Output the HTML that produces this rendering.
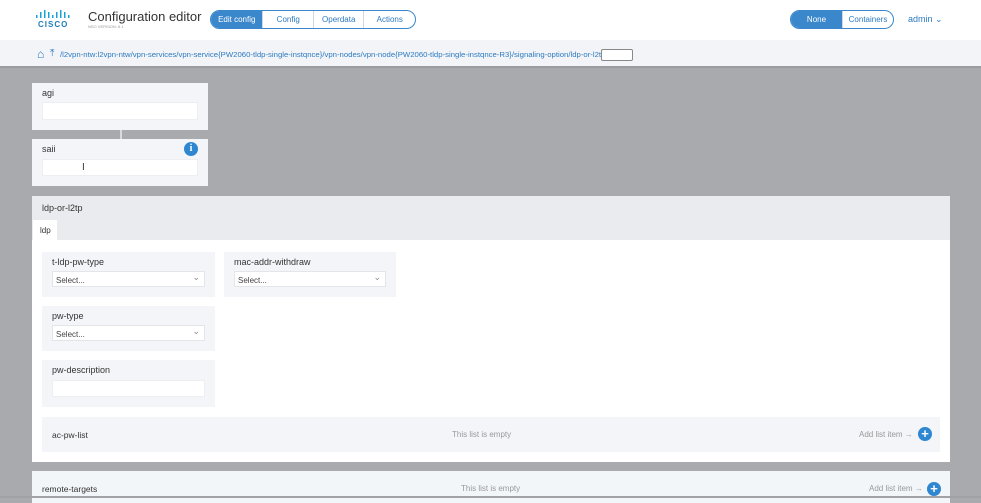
<!DOCTYPE html>
<html><head><style>
*{box-sizing:border-box;margin:0;padding:0}
body{width:981px;height:503px;overflow:hidden;background:#a8aaad;font-family:"Liberation Sans",sans-serif;position:relative;font-size:9px;color:#333}
.a{position:absolute}
.hdr{left:0;top:0;width:981px;height:40px;background:#fff}
.bc{left:0;top:40px;width:981px;height:28px;background:#f2f4f7;border-bottom:2px solid #9a9c9f}
.box{background:#f3f5f8}
.inp{background:#fff;border:1px solid #eceef1}
.lbl{font-size:9px;color:#333}
.sel{background:#fff;border:1px solid #e3e5e8;font-size:8px;color:#444;padding:4px 0 0 3px}
.sel:after{content:"⌄";position:absolute;right:4px;top:0;font-size:9px;color:#888}
.tabs{display:flex;border:1px solid #3a87cc;border-radius:10px;overflow:hidden;height:19px}
.tabs div{font-size:8px;color:#2c7ac2;display:flex;align-items:center;justify-content:center;border-left:1px solid #cfd8e2}
.tabs .on{background:#3a87cc;color:#fff;border:none}
.plus{width:14px;height:14px;border-radius:50%;background:#2f86d1;color:#fff;font-size:13px;line-height:13px;text-align:center;font-weight:bold}
.grey{color:#999;font-size:8px}
</style></head><body>
<div class="a hdr"></div>
<svg class="a" style="left:36px;top:10px" width="36" height="10"><g fill="#1d9fd8"><rect x="0" y="5" width="1.5" height="3"/><rect x="4" y="2" width="1.5" height="6"/><rect x="8" y="0" width="1.5" height="8"/><rect x="12" y="2" width="1.5" height="6"/><rect x="16" y="5" width="1.5" height="3"/><rect x="20" y="2" width="1.5" height="6"/><rect x="24" y="0" width="1.5" height="8"/><rect x="28" y="2" width="1.5" height="6"/><rect x="32" y="5" width="1.5" height="3"/></g></svg>
<div class="a" style="left:38px;top:20px;font-size:8px;font-weight:bold;color:#1d7fb8;letter-spacing:1px">CISCO</div>
<div class="a" style="left:88px;top:9px;font-size:13px;color:#333">Configuration editor</div>
<div class="a" style="left:88px;top:24px;font-size:4px;color:#999">NSO VERSION: 6.1</div>
<div class="a tabs" style="left:210px;top:10px;width:206px"><div class="on" style="width:52px">Edit config</div><div style="width:51px">Config</div><div style="width:51px">Operdata</div><div style="width:52px">Actions</div></div>
<div class="a tabs" style="left:790px;top:10px;width:104px"><div class="on" style="width:52px">None</div><div style="width:52px">Containers</div></div>
<div class="a" style="left:908px;top:14px;font-size:9px;color:#2c7ac2">admin ⌄</div>
<div class="a bc"></div>
<div class="a" style="left:37px;top:47px;font-size:12px;color:#2c7ac2;font-weight:bold">⌂</div>
<div class="a" style="left:50px;top:48px;font-size:10px;color:#2c7ac2">⤒</div>
<div class="a" style="left:60px;top:50px;font-size:7.75px;color:#2c7ac2;white-space:nowrap">/l2vpn-ntw:l2vpn-ntw/vpn-services/vpn-service{PW2060-tldp-single-instqnce}/vpn-nodes/vpn-node{PW2060-tldp-single-instqnce-R3}/signaling-option/ldp-or-l2tp/</div>
<div class="a" style="left:601px;top:49px;width:32px;height:12px;background:#fff;border:1px solid #888;border-radius:2px"></div>

<div class="a box" style="left:32px;top:83px;width:176px;height:47px"></div>
<div class="a lbl" style="left:42px;top:88px">agi</div>
<div class="a inp" style="left:42px;top:102px;width:156px;height:18px"></div>
<div class="a" style="left:120px;top:130px;width:2px;height:9px;background:#d8dadd"></div>
<div class="a box" style="left:32px;top:139px;width:176px;height:47px"></div>
<div class="a lbl" style="left:42px;top:144px">saii</div>
<div class="a" style="left:184px;top:142px;width:14px;height:14px;border-radius:50%;background:#2f86d1;color:#fff;font-size:10px;font-weight:bold;text-align:center;line-height:14px;font-family:'Liberation Serif',serif">i</div>
<div class="a inp" style="left:42px;top:159px;width:156px;height:17px"></div>
<div class="a" style="left:82px;top:162px;font-size:10px">I</div>

<div class="a" style="left:32px;top:196px;width:918px;height:266px;background:#fff"></div>
<div class="a" style="left:32px;top:196px;width:918px;height:44px;background:#eaebee"></div>
<div class="a lbl" style="left:42px;top:203px">ldp-or-l2tp</div>
<div class="a" style="left:33px;top:220px;width:24px;height:20px;background:#fff;font-size:8px;padding:6px 0 0 7px">ldp</div>

<div class="a box" style="left:42px;top:252px;width:173px;height:45px"></div>
<div class="a lbl" style="left:52px;top:257px">t-ldp-pw-type</div>
<div class="a sel" style="left:52px;top:271px;width:153px;height:16px">Select...</div>
<div class="a box" style="left:224px;top:252px;width:172px;height:45px"></div>
<div class="a lbl" style="left:234px;top:257px">mac-addr-withdraw</div>
<div class="a sel" style="left:234px;top:271px;width:152px;height:16px">Select...</div>
<div class="a box" style="left:42px;top:306px;width:173px;height:45px"></div>
<div class="a lbl" style="left:52px;top:311px">pw-type</div>
<div class="a sel" style="left:52px;top:325px;width:153px;height:16px">Select...</div>
<div class="a box" style="left:42px;top:360px;width:173px;height:47px"></div>
<div class="a lbl" style="left:52px;top:365px">pw-description</div>
<div class="a inp" style="left:52px;top:380px;width:153px;height:17px"></div>

<div class="a box" style="left:42px;top:417px;width:898px;height:35px"></div>
<div class="a lbl" style="left:52px;top:430px;font-size:8.5px">ac-pw-list</div>
<div class="a grey" style="left:452px;top:430px">This list is empty</div>
<div class="a grey" style="left:859px;top:430px">Add list item →</div>
<div class="a plus" style="left:918px;top:427px">+</div>

<div class="a" style="left:32px;top:471px;width:918px;height:32px;background:#f3f6f9"></div>
<div class="a lbl" style="left:42px;top:484px;font-size:8.5px">remote-targets</div>
<div class="a grey" style="left:461px;top:484px">This list is empty</div>
<div class="a grey" style="left:869px;top:484px">Add list item →</div>
<div class="a plus" style="left:927px;top:482px">+</div>
<div class="a" style="left:0;top:496px;width:981px;height:2px;background:#a0a2a5"></div>
</body></html>
